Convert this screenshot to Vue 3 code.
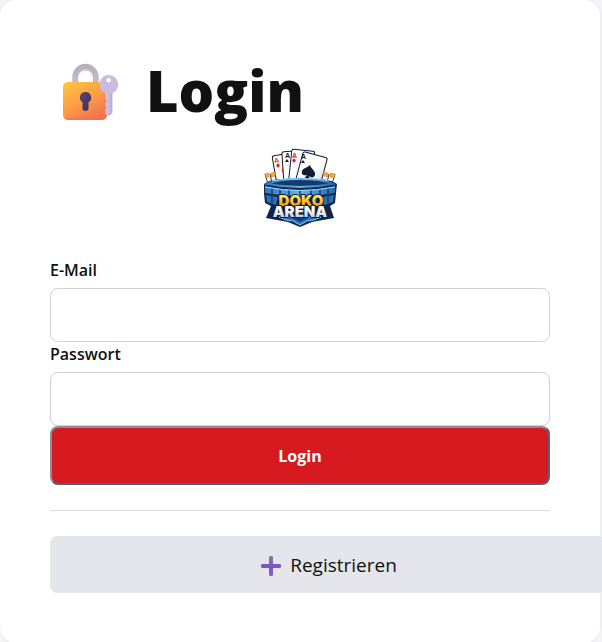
<template>
  <main class="card">
    <h1 class="title">
      <svg class="lock" viewBox="0 0 80 80" aria-hidden="true">
        <defs>
          <linearGradient id="lockBody" x1="0" y1="0" x2="0.6" y2="1">
            <stop offset="0" stop-color="#ffc83f" />
            <stop offset="0.55" stop-color="#fd9f45" />
            <stop offset="1" stop-color="#f4744f" />
          </linearGradient>
          <linearGradient id="shackle" x1="0" y1="0" x2="0" y2="1">
            <stop offset="0" stop-color="#b5b1b9" />
            <stop offset="1" stop-color="#c9c2d2" />
          </linearGradient>
          <linearGradient id="hole" x1="0" y1="0" x2="1" y2="1">
            <stop offset="0" stop-color="#5c4473" />
            <stop offset="1" stop-color="#36305c" />
          </linearGradient>
        </defs>
        <path d="M25 34V23a10.500 10.500 0 0 1 21 0V34" fill="none" stroke="url(#shackle)" stroke-width="5.500" />
        <path d="M27.500 32V24a8 8 0 0 1 16 0V32" fill="none" stroke="#c5abd6" stroke-width="1" />
        <rect x="13" y="28" width="44" height="38" rx="5" fill="url(#lockBody)" />
        <path d="M15 64Q17 66 21 65H52Q56 65 57 61" fill="none" stroke="#f06d59" stroke-width="1" />
        <path d="M48 31Q51 37 54 39V61l3 1V32q-3-4-9-1z" fill="#f07c38" opacity="0.45" />
        <path d="M35.500 38a5.500 5.500 0 0 1 3 10.200V54a3 3 0 0 1-6 0v-5.800a5.500 5.500 0 0 1 3-10.200z" fill="url(#hole)" />
        <path fill-rule="evenodd" d="M58.500 21a9.500 9.500 0 0 1 4 18.200V59l-3.500 3-4-2v-5l1.500-1.500-1.500-2V49l1.500-2-1.500-2v-5.800A9.500 9.500 0 0 1 58.500 21zm0 3a2.300 2.300 0 1 0 .1 0z" fill="#cbbcdd" />
        <path d="M61 39v20l-2 2" fill="none" stroke="#b69dcd" stroke-width="1" />
      </svg>
      <span>Login</span>
    </h1>

    <svg class="logo" viewBox="0 0 90 100" role="img" aria-label="Doko Arena">
      <defs>
        <linearGradient id="gold" x1="0" y1="0" x2="0" y2="1">
          <stop offset="0.300" stop-color="#ffe34d" />
          <stop offset="0.800" stop-color="#f59a0c" />
        </linearGradient>
        <linearGradient id="steel" x1="0" y1="0" x2="0" y2="1">
          <stop offset="0.400" stop-color="#ffffff" />
          <stop offset="0.900" stop-color="#a9c8e6" />
        </linearGradient>
        <linearGradient id="wall" x1="0" y1="0" x2="1" y2="0">
          <stop offset="0" stop-color="#2f78bd" />
          <stop offset="0.500" stop-color="#63b2ec" />
          <stop offset="1" stop-color="#2668ad" />
        </linearGradient>
        <linearGradient id="face" x1="0" y1="0" x2="1" y2="1">
          <stop offset="0.500" stop-color="#ffffff" />
          <stop offset="1" stop-color="#c3ccd6" />
        </linearGradient>
      </defs>

      <!-- cards -->
      <g stroke="#131a29" stroke-width="1" fill="url(#face)">
        <rect x="20" y="17" width="22" height="36" rx="2" transform="rotate(-10 31 35)" />
        <rect x="28" y="14" width="22" height="36" rx="2" transform="rotate(-4 39 32)" />
        <rect x="35" y="13" width="23" height="36" rx="2" transform="rotate(6 46 31)" />
        <rect x="43" y="17" width="25" height="38" rx="2" transform="rotate(15 55 36)" />
      </g>
      <g fill="#e12832" class="rank">
        <text x="19" y="26" transform="rotate(-10 21 23)">A</text>
        <path d="m23 26 2 2.500-2 2.500-2-2.500zM28 30q-3 3 1 8zM39 21l2 2.500-2 2.500-2-2.500z" />
        <text x="37" y="21">A</text>
      </g>
      <g fill="#141b2b" class="rank">
        <text x="30" y="21">A</text>
        <path d="m32 22 2 3h-4zM48 23l2 3h-4z" />
        <text x="46" y="22">A</text>
      </g>
      <path d="M55 28c1 4 6 6 5 10-1 3-4 3-6 1l1 4-6-1 3-4c-3 1-6 0-5-4 1-3 5-3 8-6z" fill="#141b2b" />

      <!-- flags -->
      <g stroke="#33363d" stroke-width="1">
        <path d="M15 37l2 9M10 37l3 10M74 37l-2 9M80 37l-3 10" />
        <path d="M16 36l5-1-1 4-4 1zM10 37l4-1v4l-3 1zM73 36l-5-1 1 4 4 1zM75 36l5 1-1 4-4-1z" fill="#f4ae35" stroke="#bd7b24" stroke-width="0.500" />
      </g>

      <!-- arena walls -->
      <path d="M9 47q5-4 16-5h40q12 1 17 5l-1 9-1 10-5 3 4 12-22 4-12 5-12-5-22-4 5-12-6-3-1-10z" fill="#102447" />
      <path d="M12 47q12-5 33-5t33 5q-33 6-66 0z" fill="#173b69" stroke="url(#wall)" stroke-width="2" />
      <path d="M10 49q35 8 70 0v7q-35 6-70 0z" fill="url(#wall)" />
      <path d="M11 58l12 2-2 8-9-3zM79 58l-12 2 2 8 9-3z" fill="#2870b4" />
      <path d="M17 48v18M25 50v9M34 51v7M45 52v6M56 51v7M65 50v9M73 48v18" stroke="#163c70" stroke-width="1.500" />
      <path d="M10 50q35 7 70 0M17 44q12-3 26-2M48 42q15-1 26 2" fill="none" stroke="#9bdcff" stroke-width="1" />

      <!-- shield -->
      <path d="M24 80h42l-7 3-7 1-7 4-7-4-7-1z" fill="#2477c5" stroke="#7ec9f3" stroke-width="1" />
      <path d="M35 80h20l-10 5z" fill="#103d76" />

      <text class="name doko" x="46" y="69">DOKO</text>
      <text class="name arena" x="45" y="80">ARENA</text>
    </svg>

    <form @submit.prevent>
      <label for="email">E-Mail</label>
      <input id="email" v-model="email" type="email" autocomplete="email">
      <label for="password">Passwort</label>
      <input id="password" v-model="password" type="password" autocomplete="current-password">
      <button class="login" type="submit">Login</button>
    </form>

    <hr>

    <a class="register" href="#">
      <svg class="plus" viewBox="0 0 24 24" aria-hidden="true">
        <defs>
          <linearGradient id="plusFill" x1="0" y1="0" x2="0" y2="1">
            <stop offset="0" stop-color="#887da9" />
            <stop offset="0.500" stop-color="#7956bd" />
            <stop offset="1" stop-color="#8962cf" />
          </linearGradient>
        </defs>
        <path d="M12 4v16M4 12h16" stroke="#7953c0" stroke-width="4" stroke-linecap="round" />
        <path d="M10 4a2 2 0 0 1 4 0v6h6a2 2 0 0 1 0 4h-6v6a2 2 0 0 1-4 0v-6H4a2 2 0 0 1 0-4h6z" fill="url(#plusFill)" />
      </svg>
      <span>Registrieren</span>
    </a>
  </main>
</template>

<script setup>
import { ref } from "vue";

const email = ref("");
const password = ref("");
</script>

<style>
body {
  margin: 0;
  background: #f4f4f9;
  overflow-x: hidden;
}
</style>

<style scoped>
.card {
  margin-right: 2px;
  padding: 50px;
  border-radius: 16px;
  background: #fff;
  color: #111;
  font-family: "Segoe UI", "Open Sans", "Noto Sans", sans-serif;
  box-shadow: 0 0 4px rgba(0, 0, 0, 0.08);
}

.title {
  display: flex;
  align-items: flex-start;
  gap: 16px;
  margin: 0 0 3px;
  padding-top: 4px;
  font-size: 56px;
  font-weight: 800;
  line-height: 72px;
}

.lock {
  width: 80px;
  height: 80px;
}

.logo {
  display: block;
  width: 90px;
  height: 100px;
  margin: 0 auto 21px;
}

.rank {
  font: bold 7px "Liberation Sans", sans-serif;
}

.name {
  font-family: Inter, "Liberation Sans", sans-serif;
  font-weight: 900;
  text-anchor: middle;
  stroke: #101d3b;
  stroke-width: 2px;
  stroke-linejoin: round;
  paint-order: stroke;
}

.doko {
  font-size: 15px;
  fill: url(#gold);
}

.arena {
  font-size: 15px;
  fill: url(#steel);
}

label {
  display: block;
  margin-bottom: 6px;
  font-size: 16px;
  font-weight: 600;
  line-height: 24px;
}

input {
  display: block;
  box-sizing: border-box;
  width: 100%;
  height: 54px;
  padding: 14px;
  border: 1px solid #d1d1d9;
  border-radius: 8px;
  background: #fff;
  font: inherit;
}

.login {
  display: block;
  width: 100%;
  padding: 16px 14px 15px;
  border: 2px solid;
  border-color: #8b8d99 #5b5f6b #5b5f6b #8b8d99;
  border-radius: 8px;
  background: #d71920;
  color: #fff;
  font-family: inherit;
  font-size: 16px;
  font-weight: 700;
  line-height: 24px;
  cursor: pointer;
}

hr {
  margin: 25px 0;
  border: 0;
  border-top: 1px solid #ddd;
}

.register {
  display: flex;
  align-items: center;
  justify-content: center;
  gap: 7px;
  width: 100%;
  padding: 15px 28px 13px;
  border-radius: 8px;
  background: #e5e6eb;
  color: #111;
  font-size: 19px;
  line-height: 29px;
  text-decoration: none;
}

.plus {
  width: 24px;
  height: 24px;
}
</style>
